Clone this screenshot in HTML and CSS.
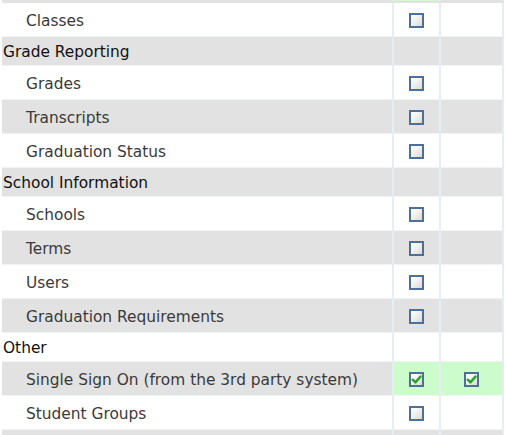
FILE: index.html
```html
<!DOCTYPE html>
<html lang="en">
<head>
<meta charset="UTF-8">
<title>Role Permissions</title>
<link rel="stylesheet" href="styles.css">
</head>
<body>

<div class="perm-wrap">
<table class="perm-table">
    <colgroup>
        <col class="name-col">
        <col class="view-col">
        <col class="edit-col">
    </colgroup>
    <tbody>
        <!-- tail of the row scrolled above -->
        <tr class="edge">
            <td></td>
            <td class="on"></td>
            <td></td>
        </tr>
        <tr class="item">
            <td>Classes</td>
            <td><span class="box"></span></td>
            <td></td>
        </tr>
        <tr class="group">
            <td>Grade Reporting</td>
            <td></td>
            <td></td>
        </tr>
        <tr class="item">
            <td>Grades</td>
            <td><span class="box"></span></td>
            <td></td>
        </tr>
        <tr class="item">
            <td>Transcripts</td>
            <td><span class="box"></span></td>
            <td></td>
        </tr>
        <tr class="item">
            <td>Graduation Status</td>
            <td><span class="box"></span></td>
            <td></td>
        </tr>
        <tr class="group">
            <td>School Information</td>
            <td></td>
            <td></td>
        </tr>
        <tr class="item">
            <td>Schools</td>
            <td><span class="box"></span></td>
            <td></td>
        </tr>
        <tr class="item">
            <td>Terms</td>
            <td><span class="box"></span></td>
            <td></td>
        </tr>
        <tr class="item">
            <td>Users</td>
            <td><span class="box"></span></td>
            <td></td>
        </tr>
        <tr class="item">
            <td>Graduation Requirements</td>
            <td><span class="box"></span></td>
            <td></td>
        </tr>
        <tr class="group">
            <td>Other</td>
            <td></td>
            <td></td>
        </tr>
        <tr class="item">
            <td>Single Sign On (from the 3rd party system)</td>
            <td class="on"><span class="box checked"><svg viewBox="0 0 10 10"><path d="M1.6 5.2 L4 7.6 L8.6 2.4" /></svg></span></td>
            <td class="on"><span class="box checked"><svg viewBox="0 0 10 10"><path d="M1.6 5.2 L4 7.6 L8.6 2.4" /></svg></span></td>
        </tr>
        <tr class="item">
            <td>Student Groups</td>
            <td><span class="box"></span></td>
            <td></td>
        </tr>
        <tr class="item">
            <td></td>
            <td></td>
            <td></td>
        </tr>
    </tbody>
</table>
</div>

</body>
</html>
```

FILE: styles.css
```css
html, body {
    margin: 0;
    padding: 0;
    background: #fff;
    font-family: "DejaVu Sans", Lato, sans-serif;
}

.perm-wrap {
    height: 435px;
    overflow: hidden;
}

.perm-table {
    margin: 0 0 0 2px;
    border-collapse: collapse;
    table-layout: fixed;
    width: 502px;
}

.name-col {
    width: 391px;
}

.view-col {
    width: 47px;
}

.perm-table td {
    padding: 0;
    text-align: center;
    vertical-align: middle;
    border-left: 2px solid #e6edf3;
    border-right: 2px solid #e6edf3;
    border-bottom: 1px solid #f1f4f6;
}

.perm-table td:first-child {
    border-left: none;
    text-align: left;
}

.perm-table tr:nth-child(odd) {
    background: #e2e2e2;
}

/* thin strip left of the row above */
.edge td {
    height: 1px;
    border-bottom: 2px solid #e2e2e2;
}

.item td {
    height: 31px;
    padding-top: 2px;
}

.item td:first-child {
    padding-left: 24px;
    font-size: 15.4px;
    color: #3a3a3a;
}

.group td {
    height: 26px;
    padding-top: 2px;
}

.group td:first-child {
    padding-left: 1px;
    font-size: 15.4px;
    color: #111;
}

.perm-table td.on {
    background: #ccfccc;
}

/* checkbox drawn by hand */
.box {
    display: inline-block;
    box-sizing: border-box;
    width: 15px;
    height: 15px;
    border: 2px solid #4d6f98;
    background: linear-gradient(135deg, #ffffff 0%, #f1f1ef 45%, #d9d9d6 100%);
    vertical-align: middle;
    position: relative;
    top: -1px;
}

.box svg {
    display: block;
    width: 11px;
    height: 11px;
}

.box svg path {
    fill: none;
    stroke: #27a327;
    stroke-width: 2.2;
    stroke-linecap: round;
    stroke-linejoin: round;
}
```
